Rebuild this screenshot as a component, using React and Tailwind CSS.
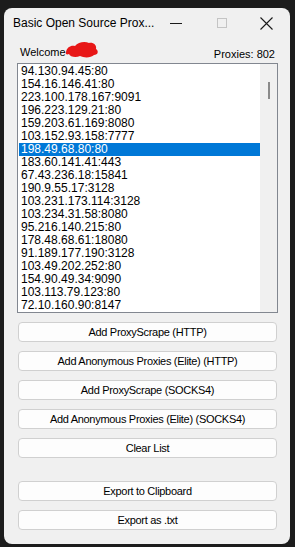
import React from 'react';

const proxies = [
    '94.130.94.45:80',
    '154.16.146.41:80',
    '223.100.178.167:9091',
    '196.223.129.21:80',
    '159.203.61.169:8080',
    '103.152.93.158:7777',
    '198.49.68.80:80',
    '183.60.141.41:443',
    '67.43.236.18:15841',
    '190.9.55.17:3128',
    '103.231.173.114:3128',
    '103.234.31.58:8080',
    '95.216.140.215:80',
    '178.48.68.61:18080',
    '91.189.177.190:3128',
    '103.49.202.252:80',
    '154.90.49.34:9090',
    '103.113.79.123:80',
    '72.10.160.90:8147',
];

const topButtons = [
    'Add ProxyScrape (HTTP)',
    'Add Anonymous Proxies (Elite) (HTTP)',
    'Add ProxyScrape (SOCKS4)',
    'Add Anonymous Proxies (Elite) (SOCKS4)',
    'Clear List',
];

function WinButton({ label }) {
    return (
        <button className="w-[259px] h-[20px] rounded-[4px] border border-[#d0d0d0] bg-[#fdfdfd] text-[11px] tracking-[-0.3px] text-black leading-none flex items-center justify-center">
            {label}
        </button>
    );
}

export default function App() {
    const selected = 6;

    return (
        <div className="w-[295px] h-[547px] bg-[#1c1c1c] pt-[8px] pl-[4px] overflow-hidden" style={{ fontFamily: '"Liberation Sans", Arial, sans-serif' }}>
            <div className="w-[286px] h-[536px] rounded-[8px] bg-[#f0f0f0] flex flex-col">
                {/* title bar */}
                <div className="h-[30px] flex items-center shrink-0">
                    <span className="pl-[9px] w-[155px] text-[12px] text-black whitespace-nowrap">
                        Basic Open Source Prox...
                    </span>
                    <div className="ml-[11px] w-[12px] h-px bg-[#1a1a1a]" />
                    <div className="ml-[35px] w-[10px] h-[10px] border border-[#c4c4c4]" />
                    <svg className="ml-[33px]" width="13" height="13" viewBox="0 0 13 13">
                        <path d="M0.5 0.5 L12.5 12.5 M12.5 0.5 L0.5 12.5" stroke="#1a1a1a" strokeWidth="1.1" />
                    </svg>
                </div>

                {/* header row */}
                <div className="h-[25px] pl-[16px] pr-[15px] flex justify-between shrink-0 text-[11px] text-black">
                    <div className="flex items-start mt-[6px]">
                        <span>Welcome</span>
                        <svg className="-ml-[1px] -mt-[3px]" width="34" height="18" viewBox="0 0 34 18">
                            <path d="M1 11 C2 6 6 4 10 5 C13 1 20 0 24 2 C28 1 32 4 31 8 C34 10 33 14 29 14 C26 17 19 17 15 15 C11 17 5 16 4 13 C2 14 0 13 1 11 Z" fill="#e81717" />
                        </svg>
                    </div>
                    <span className="mt-[8px]">Proxies: 802</span>
                </div>

                {/* list */}
                <div className="ml-[13px] w-[261px] h-[250px] border border-[#828790] bg-white flex shrink-0">
                    <div className="flex-1 pt-[1px] pl-[1px] overflow-hidden">
                        {proxies.map((p, i) => (
                            <div
                                key={p}
                                className={`h-[13px] pl-[2px] text-[12px] leading-[13px] whitespace-nowrap ${i === selected ? 'bg-[#0078d7] text-white' : 'text-black'}`}
                            >
                                {p}
                            </div>
                        ))}
                    </div>
                    <div className="w-[17px] bg-[#f0f0f0] pt-[18px] flex justify-center">
                        <div className="w-[2px] h-[17px] bg-[#8a8a8a]" />
                    </div>
                </div>

                {/* buttons */}
                <div className="ml-[14px] mt-[9px] flex flex-col gap-[9px]">
                    {topButtons.map((b) => (
                        <WinButton key={b} label={b} />
                    ))}
                </div>
                <div className="ml-[14px] mt-[23px] flex flex-col gap-[9px]">
                    <WinButton label="Export to Clipboard" />
                    <WinButton label="Export as .txt" />
                </div>
            </div>
        </div>
    );
}
